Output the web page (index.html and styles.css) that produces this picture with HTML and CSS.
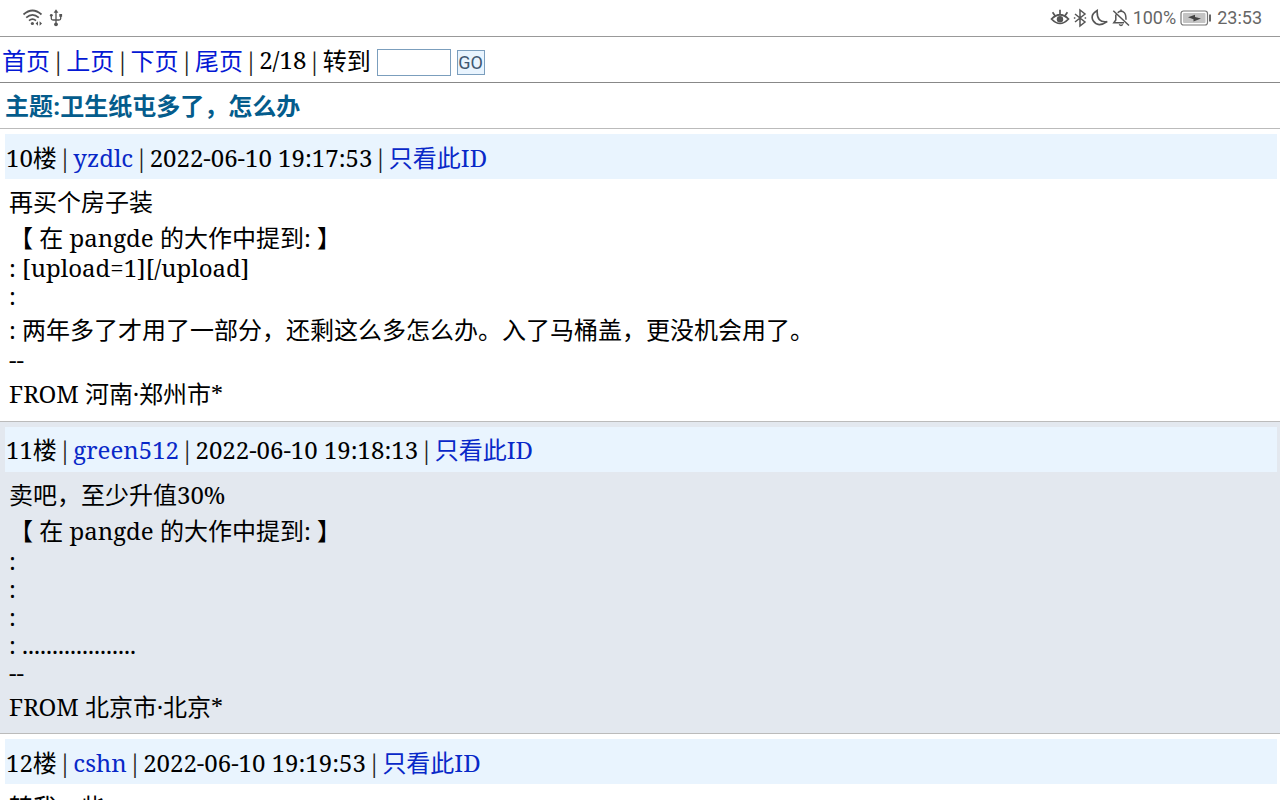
FILE: index.html
```html
<!DOCTYPE html>
<html lang="zh-CN">
<head>
    <meta charset="UTF-8">
    <meta name="viewport" content="width=device-width, initial-scale=1.0">
    <title>卫生纸屯多了，怎么办</title>
    <link rel="stylesheet" href="styles.css">
</head>
<body>

    <div class="status">
        <div class="status-left">
            <svg width="22" height="20" viewBox="0 0 22 20" fill="none" stroke="#555" stroke-width="1.7">
                <path d="M1.5 6.5Q10.5 -1.5 19.5 6.5M4.2 9.7Q10.5 4 16.8 9.7M7 12.6Q10.5 9.6 14 12.6"/>
                <circle cx="10.4" cy="15.5" r="1.6" fill="#555" stroke="none"/>
                <path d="M16 13.2V17.8L13.6 15.5ZM17.6 13.2V17.8L20 15.5Z" fill="#555" stroke="none"/>
            </svg>
            <svg width="14" height="20" viewBox="0 0 14 20" fill="none" stroke="#555" stroke-width="1.3">
                <path d="M7 3V16M2.3 8V10.5Q2.3 12 4 12H10Q11.7 12 11.7 10.5V8"/>
                <path d="M4.6 4.8L7 1.2L9.4 4.8Z" fill="#555" stroke="none"/>
                <circle cx="7" cy="16.3" r="1.9" fill="#555" stroke="none"/>
                <circle cx="2.3" cy="7.3" r="1.4" fill="#555" stroke="none"/>
                <path d="M10.3 6H13.1V8.8H10.3Z" fill="#555" stroke="none"/>
            </svg>
        </div>
        <div class="status-right">
            <svg width="20" height="20" viewBox="0 0 20 20" fill="none" stroke="#555" stroke-width="1.7">
                <path d="M1.5 11Q10 2.5 18.5 11Q10 20 1.5 11ZM10 6.5V1.8M5 7.8L2.6 4.2M15 7.8L17.4 4.2"/>
                <circle cx="10" cy="11.2" r="3.2" fill="#555" stroke="none"/>
            </svg>
            <svg width="20" height="20" viewBox="0 0 20 20" fill="none" stroke="#555" stroke-width="1.5">
                <path d="M5 6L15 14L10 18V2L15 6L5 14"/>
                <path d="M4.6 9.2V10.8M15.4 9.2V10.8"/>
            </svg>
            <svg width="20" height="20" viewBox="0 0 20 20" fill="none" stroke="#555" stroke-width="1.6">
                <path d="M7.2 2.5Q-.2 6.8 3.2 12.8Q8 20 17.2 13.6Q6.5 15.2 7.2 2.5Z"/>
            </svg>
            <svg class="bell" width="22" height="20" viewBox="0 0 22 20" fill="none" stroke="#555" stroke-width="1.5">
                <path d="M3.3 2.8L19 17.5M7.7 4.7Q11 1.6 14.4 4.7Q16 6.2 16 11.8M5.8 6.5V12L3.8 14.8H14M11 1.4V3"/>
                <path d="M9.2 16.4Q11 18.6 12.8 16.4"/>
            </svg>
            <span class="status-text">100%</span>
            <svg class="battery" width="32" height="16" viewBox="0 0 32 16">
                <rect x="1" y="1" width="26.5" height="14" rx="2.5" fill="#fff" stroke="#777" stroke-width="1.2"/>
                <rect x="3" y="3" width="22.5" height="10" rx="1" fill="#c4c4c4"/>
                <path d="M8 7.2L15 4.8V6.9L21 8.5L13.5 11.4V9.2Z" fill="#444"/>
                <rect x="29" y="4.5" width="2" height="7" fill="#666"/>
            </svg>
            <span class="status-text">23:53</span>
        </div>
    </div>

    <div class="nav">
        <a href="#">首页</a><i>|</i><a href="#">上页</a><i>|</i><a href="#">下页</a><i>|</i><a href="#">尾页</a><i>|</i>2/18<i>|</i>转到
        <input type="text" class="page">
        <button class="go">GO</button>
    </div>

    <div class="title">主题:卫生纸屯多了，怎么办</div>

    <div class="post">
        <div class="head">10楼<i>|</i><a href="#">yzdlc</a><i>|</i>2022-06-10 19:17:53<i>|</i><a href="#">只看此ID</a></div>
        <div class="body">
            <p>再买个房子装</p>
            <p>【 在 pangde 的大作中提到: 】</p>
            <p class="short">: [upload=1][/upload]</p>
            <p class="short">:</p>
            <p>: 两年多了才用了一部分，还剩这么多怎么办。入了马桶盖，更没机会用了。</p>
            <p class="short">--</p>
            <p>FROM 河南·郑州市*</p>
        </div>
    </div>

    <div class="post alt">
        <div class="head">11楼<i>|</i><a href="#">green512</a><i>|</i>2022-06-10 19:18:13<i>|</i><a href="#">只看此ID</a></div>
        <div class="body">
            <p>卖吧，至少升值30%</p>
            <p>【 在 pangde 的大作中提到: 】</p>
            <p class="short">:</p>
            <p class="short">:</p>
            <p class="short">:</p>
            <p class="short">: ...................</p>
            <p class="short">--</p>
            <p>FROM 北京市·北京*</p>
        </div>
    </div>

    <div class="post">
        <div class="head">12楼<i>|</i><a href="#">cshn</a><i>|</i>2022-06-10 19:19:53<i>|</i><a href="#">只看此ID</a></div>
        <div class="body">
            <p>转我一些</p>
        </div>
    </div>

</body>
</html>
```
FILE: styles.css
```css
html {
    height: 100%;
    overflow: hidden;
}
body {
    margin: 0;
    height: 800px;
    overflow: hidden;
    background-color: #fff;
    color: #000;
    font-family: "Noto Serif", "Noto Sans CJK SC", serif;
    font-size: 24px;
}
a {
    color: #0828c8;
    text-decoration: none;
}
i {
    display: inline-flex;
    justify-content: center;
    width: 16.5px;
    color: #222;
    font-family: "Noto Sans CJK SC", sans-serif;
    font-size: 22px;
    font-style: normal;
    line-height: 1;
}
.status {
    display: flex;
    justify-content: space-between;
    box-sizing: border-box;
    height: 37px;
    padding: 0 18px 0 22px;
    border-bottom: 1px solid #999;
}
.status-left, .status-right {
    display: flex;
    align-items: center;
}
.status-left {
    gap: 5px;
}
.status-text {
    color: #666;
    font-family: Roboto, sans-serif;
    font-size: 18px;
    line-height: 20px;
}
.bell {
    margin-right: 1px;
}
.battery {
    margin: 0 5px 0 4px;
}
.nav {
    display: flex;
    align-items: center;
    box-sizing: border-box;
    height: 46px;
    padding: 0 0 0 2px;
    border-bottom: 1px solid #888;
}
.nav a {
    color: #0418d4;
}
.nav i {
    width: 16.3px;
}
.page {
    box-sizing: border-box;
    width: 74px;
    height: 27px;
    margin: 6px 0 0 6px;
    padding: 0;
    border: 1px solid #7b9ebd;
    background-color: #fff;
}
.go {
    box-sizing: border-box;
    width: 28px;
    height: 25px;
    margin: 6px 0 0 6px;
    padding: 0;
    border: 1px solid #7b9ebd;
    background-color: #e9f4fe;
    color: #3f5871;
    font-family: Roboto, sans-serif;
    font-size: 18px;
    line-height: 23px;
}
.title {
    box-sizing: border-box;
    height: 46px;
    padding-left: 5px;
    border-bottom: 1px solid #bbb;
    color: #045c8c;
    font-weight: bold;
    line-height: 45px;
}
.post {
    padding: 5px 3px 8.5px 5px;
    border-bottom: 1px solid #bbb;
}
.alt {
    background-color: #e3e8ef;
}
.head {
    height: 45px;
    padding-left: 1px;
    background-color: #e9f4fe;
    line-height: 47px;
}
.alt .head {
    line-height: 46px;
}
.body {
    padding: 5px 4px 0;
}
.body p {
    margin: 0;
    height: 36px;
    line-height: 36px;
    white-space: pre;
}
.body .short {
    height: 28px;
    line-height: 24px;
}
```
